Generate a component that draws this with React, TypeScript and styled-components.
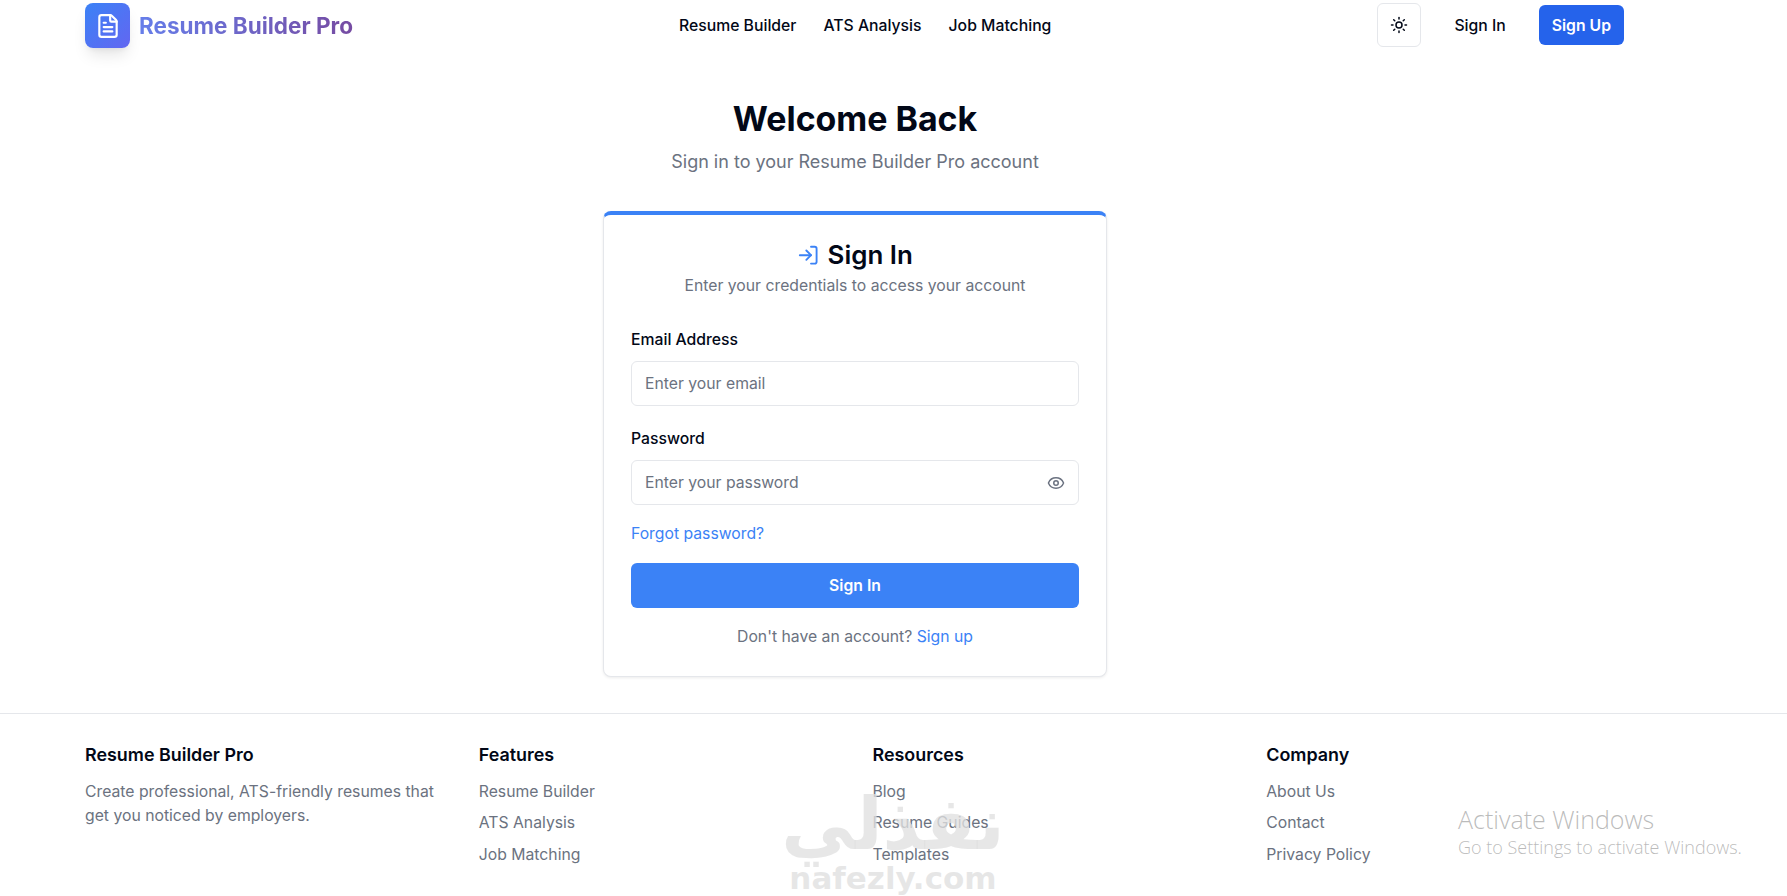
import React from 'react';
import styled, { createGlobalStyle } from 'styled-components';
import { Eye, FileText, LogIn, Sun } from 'lucide-react';

const GlobalStyle = createGlobalStyle`
  * {
    box-sizing: border-box;
  }

  html,
  body {
    margin: 0;
    padding: 0;
    background: #fff;
    font-family: Inter, 'Liberation Sans', sans-serif;
    color: #020817;
  }
`;

const Page = styled.div`
  position: relative;
  width: 100%;
  height: 896px;
  overflow: hidden;
  display: flex;
  flex-direction: column;
`;

const Container = styled.div`
  padding: 0 162px 0 85px;
`;

const Header = styled.header`
  height: 50px;
  display: flex;
  justify-content: space-between;
  align-items: center;
`;

const Brand = styled.a`
  display: flex;
  align-items: center;
  gap: 9px;
`;

const BrandMark = styled.div`
  width: 45px;
  height: 45px;
  margin-top: 1px;
  border-radius: 8px;
  background: linear-gradient(135deg, #3b82f6, #6366f1);
  box-shadow: 0 10px 15px -3px rgba(0, 0, 0, 0.1), 0 4px 6px -4px rgba(0, 0, 0, 0.1);
  color: #fff;
  display: flex;
  align-items: center;
  justify-content: center;
`;

const BrandName = styled.span`
  font-size: 22.5px;
  font-weight: 700;
  background: linear-gradient(90deg, #667eea, #764ba2);
  -webkit-background-clip: text;
  background-clip: text;
  color: transparent;
`;

const Nav = styled.nav`
  display: flex;
  gap: 27px;
`;

const NavLink = styled.a`
  font-size: 15.75px;
  font-weight: 500;
  color: #020817;
`;

const Actions = styled.div`
  margin-right: 1px;
  display: flex;
  align-items: center;
  justify-content: flex-end;
`;

const ThemeToggle = styled.button`
  width: 44px;
  height: 44px;
  padding: 0;
  background: #fff;
  border: 1px solid #e5e7eb;
  border-radius: 6px;
  color: #020817;
  display: flex;
  align-items: center;
  justify-content: center;
`;

const HeaderButton = styled.button<{ $primary?: boolean }>`
  height: 40px;
  padding: 0 13px;
  margin-left: 20px;
  border: none;
  border-radius: 6px;
  background: ${(p) => (p.$primary ? '#2563eb' : 'transparent')};
  color: ${(p) => (p.$primary ? '#fff' : '#020817')};
  font-family: Inter, sans-serif;
  font-size: 15.75px;
  font-weight: ${(p) => (p.$primary ? 600 : 500)};
`;

const Main = styled.main`
  padding-top: 45px;
  display: flex;
  flex-direction: column;
  align-items: center;
`;

const Title = styled.h1`
  margin: 0;
  font-size: 33.9px;
  line-height: 48px;
  font-weight: 700;
  color: #020817;
`;

const Subtitle = styled.p`
  margin: 5px 0 0;
  font-size: 18px;
  line-height: 28px;
  color: #6b7280;
`;

const Card = styled.section`
  margin-top: 35px;
  width: 504px;
  height: 466px;
  padding: 0 27px;
  background: #fff;
  border: 1px solid #e5e7eb;
  border-top: 4px solid #3b82f6;
  border-radius: 8px;
  box-shadow: 0 1px 3px rgba(0, 0, 0, 0.08);
`;

const CardTitle = styled.h2`
  margin: 24px 0 0;
  display: flex;
  align-items: center;
  justify-content: center;
  gap: 8px;
  font-size: 25.9px;
  line-height: 32px;
  font-weight: 600;
  color: #020817;

  svg {
    color: #3b82f6;
  }
`;

const CardHint = styled.p`
  margin: 5px 0 0;
  text-align: center;
  font-size: 15.75px;
  line-height: 20px;
  color: #6b7280;
`;

const Field = styled.div<{ $first?: boolean }>`
  margin-top: ${(p) => (p.$first ? '34px' : '23px')};
`;

const Label = styled.label`
  display: block;
  font-size: 15.75px;
  font-weight: 500;
  line-height: 20px;
  color: #020817;
`;

const InputBox = styled.div`
  margin-top: 11px;
  height: 45px;
  padding: 0 13px;
  border: 1px solid #e5e7eb;
  border-radius: 6px;
  background: #fff;
  display: flex;
  align-items: center;
  justify-content: space-between;
  color: #6b7280;
`;

const Input = styled.input`
  flex: 1;
  min-width: 0;
  padding: 0;
  border: none;
  outline: none;
  background: transparent;
  font-family: Inter, sans-serif;
  font-size: 15.75px;

  &::placeholder {
    color: #6b7280;
    opacity: 1;
  }
`;

const TextLink = styled.a`
  font-size: 15.75px;
  color: #3b82f6;
`;

const ForgotRow = styled.div`
  margin-top: 18px;
  line-height: 20px;
`;

const SubmitButton = styled.button`
  margin-top: 19px;
  width: 100%;
  height: 45px;
  border: none;
  border-radius: 6px;
  background: #3b82f6;
  color: #fff;
  font-family: Inter, sans-serif;
  font-size: 15.75px;
  font-weight: 600;
`;

const SwitchRow = styled.p`
  margin: 19px 0 0;
  text-align: center;
  font-size: 15.75px;
  line-height: 20px;
  color: #6b7280;
`;

const Footer = styled.footer`
  margin-top: 36px;
  border-top: 1px solid #e5e7eb;
  padding-top: 29px;
`;

const FooterGrid = styled.div`
  display: grid;
  grid-template-columns: repeat(4, 1fr);
  column-gap: 35px;
`;

const FooterHeading = styled.h3`
  margin: 0 0 12.5px;
  font-size: 17.9px;
  line-height: 24px;
  font-weight: 600;
  color: #020817;
`;

const FooterText = styled.p`
  margin: 0;
  font-size: 15.75px;
  line-height: 24px;
  color: #6b7280;
`;

const FooterList = styled.ul`
  margin: 0;
  padding: 0;
  list-style: none;
  display: flex;
  flex-direction: column;
  gap: 8px;
`;

const FooterLink = styled.a`
  display: block;
  font-size: 15.75px;
  line-height: 23.5px;
  color: #6b7280;
`;

const Watermark = styled.div`
  position: absolute;
  left: 770px;
  top: 788px;
  width: 246px;
  text-align: center;
  color: rgba(224, 224, 224, 0.78);
  font-family: 'DejaVu Sans', sans-serif;
  font-weight: 700;
  pointer-events: none;
`;

const WatermarkArabic = styled.div`
  font-size: 73px;
  line-height: 72px;
`;

const WatermarkLatin = styled.div`
  font-size: 31px;
  line-height: 36px;
`;

const ActivateNotice = styled.div`
  position: absolute;
  left: 1458px;
  top: 804px;
  color: rgba(120, 120, 120, 0.5);
  font-family: 'Open Sans', sans-serif;
  font-weight: 300;
  pointer-events: none;
`;

const ActivateTitle = styled.div`
  font-size: 25px;
  line-height: 30px;
`;

const ActivateHint = styled.div`
  margin-top: 2px;
  font-size: 18px;
  line-height: 23px;
`;

const footerColumns = [
  { title: 'Features', links: ['Resume Builder', 'ATS Analysis', 'Job Matching'] },
  { title: 'Resources', links: ['Blog', 'Resume Guides', 'Templates'] },
  { title: 'Company', links: ['About Us', 'Contact', 'Privacy Policy'] },
];

export default function App() {
  return (
    <Page>
      <GlobalStyle />
      <Container>
        <Header>
          <Brand>
            <BrandMark>
              <FileText size={26} />
            </BrandMark>
            <BrandName>Resume Builder Pro</BrandName>
          </Brand>
          <Nav>
            <NavLink>Resume Builder</NavLink>
            <NavLink>ATS Analysis</NavLink>
            <NavLink>Job Matching</NavLink>
          </Nav>
          <Actions>
            <ThemeToggle>
              <Sun size={18} />
            </ThemeToggle>
            <HeaderButton>Sign In</HeaderButton>
            <HeaderButton $primary>Sign Up</HeaderButton>
          </Actions>
        </Header>

        <Main>
          <Title>Welcome Back</Title>
          <Subtitle>Sign in to your Resume Builder Pro account</Subtitle>
          <Card>
            <CardTitle>
              <LogIn size={22.4} />
              Sign In
            </CardTitle>
            <CardHint>Enter your credentials to access your account</CardHint>
            <Field $first>
              <Label>Email Address</Label>
              <InputBox>
                <Input placeholder="Enter your email" />
              </InputBox>
            </Field>
            <Field>
              <Label>Password</Label>
              <InputBox>
                <Input placeholder="Enter your password" />
                <Eye size={18} />
              </InputBox>
            </Field>
            <ForgotRow>
              <TextLink>Forgot password?</TextLink>
            </ForgotRow>
            <SubmitButton>Sign In</SubmitButton>
            <SwitchRow>
              Don't have an account? <TextLink>Sign up</TextLink>
            </SwitchRow>
          </Card>
        </Main>
      </Container>

      <Footer>
        <Container>
          <FooterGrid>
            <div>
              <FooterHeading>Resume Builder Pro</FooterHeading>
              <FooterText>
                Create professional, ATS-friendly resumes that get you noticed by employers.
              </FooterText>
            </div>
            {footerColumns.map((column) => (
              <div key={column.title}>
                <FooterHeading>{column.title}</FooterHeading>
                <FooterList>
                  {column.links.map((link) => (
                    <li key={link}>
                      <FooterLink>{link}</FooterLink>
                    </li>
                  ))}
                </FooterList>
              </div>
            ))}
          </FooterGrid>
        </Container>
      </Footer>

      <Watermark>
        <WatermarkArabic>نفذلي</WatermarkArabic>
        <WatermarkLatin>nafezly.com</WatermarkLatin>
      </Watermark>
      <ActivateNotice>
        <ActivateTitle>Activate Windows</ActivateTitle>
        <ActivateHint>Go to Settings to activate Windows.</ActivateHint>
      </ActivateNotice>
    </Page>
  );
}
